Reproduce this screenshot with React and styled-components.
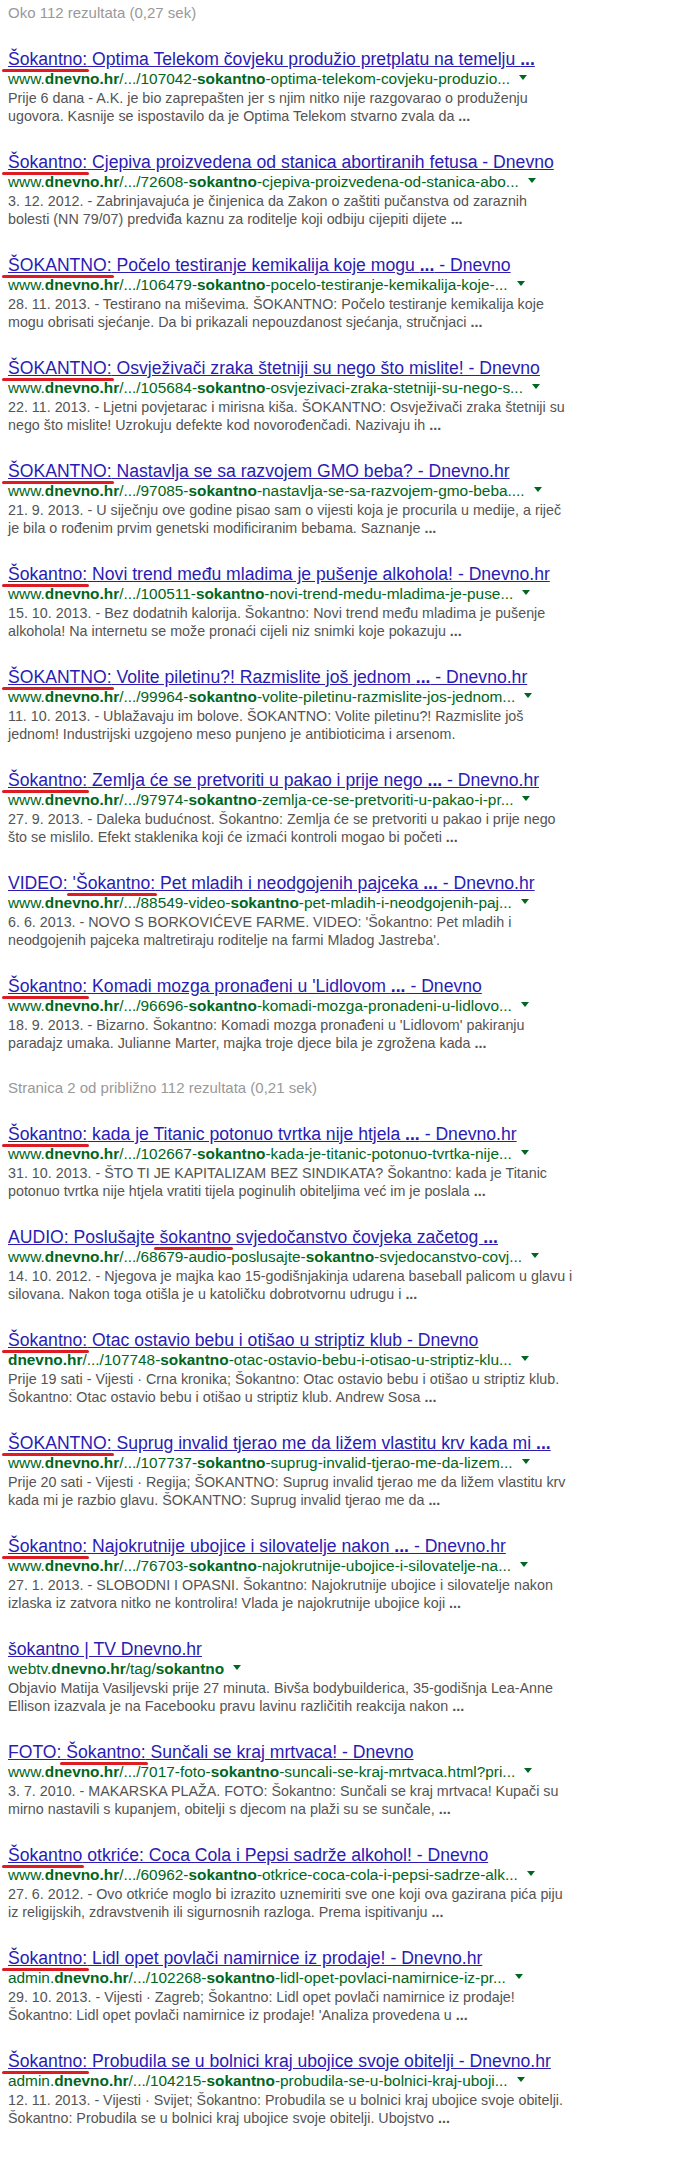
import React from 'react';
import styled, { createGlobalStyle } from 'styled-components';

const GlobalStyle = createGlobalStyle`
  body {
    margin: 0;
    background: #fff;
    font-family: Arial, "Liberation Sans", sans-serif;
  }
`;

const Page = styled.div`
  width: 700px;
  padding: 4px 0 20px 8px;
  box-sizing: border-box;
`;

const Stats = styled.div`
  font-size: 15px;
  line-height: 18px;
  color: #999;
  margin-bottom: 27px;
  margin-top: ${(p) => (p.$second ? '23px' : '0')};
`;

const Result = styled.div`
  margin-bottom: 27px;
`;

const Title = styled.a`
  display: inline-block;
  font-size: 17.6px;
  line-height: 20px;
  color: #2a1cb4;
  text-decoration: underline;
  white-space: nowrap;
  cursor: pointer;
`;

const Marked = styled.span`
  position: relative;

  &::after {
    content: '';
    position: absolute;
    left: -6px;
    right: -2px;
    bottom: -3px;
    height: 3px;
    border-radius: 2px;
    background: #dd1c24;
  }
`;

const Url = styled.div`
  font-size: 15.4px;
  line-height: 20px;
  color: #006621;
  white-space: nowrap;

  b {
    font-weight: bold;
  }
`;

const Arrow = styled.span`
  display: inline-block;
  margin-left: 9px;
  width: 0;
  height: 0;
  border-left: 4px solid transparent;
  border-right: 4px solid transparent;
  border-top: 5px solid #006621;
  vertical-align: middle;
  position: relative;
  top: -2px;
`;

const Snippet = styled.div`
  font-size: 14.3px;
  line-height: 18px;
  color: #545454;
  white-space: nowrap;
`;

const withDots = (text) =>
  text.split('...').map((part, i, arr) => (
    <React.Fragment key={i}>
      {part}
      {i < arr.length - 1 && <b>...</b>}
    </React.Fragment>
  ));

const D = 'dnevno.hr';
const S = 'sokantno';

const page1 = [
  {
    t: ['', 'Šokantno:', ' Optima Telekom čovjeku produžio pretplatu na temelju ...'],
    u: ['www.', D, '/.../107042-', S, '-optima-telekom-covjeku-produzio...'],
    s: ['Prije 6 dana - A.K. je bio zaprepašten jer s njim nitko nije razgovarao o produženju', 'ugovora. Kasnije se ispostavilo da je Optima Telekom stvarno zvala da ...'],
  },
  {
    t: ['', 'Šokantno:', ' Cjepiva proizvedena od stanica abortiranih fetusa - Dnevno'],
    u: ['www.', D, '/.../72608-', S, '-cjepiva-proizvedena-od-stanica-abo...'],
    s: ['3. 12. 2012. - Zabrinjavajuća je činjenica da Zakon o zaštiti pučanstva od zaraznih', 'bolesti (NN 79/07) predviđa kaznu za roditelje koji odbiju cijepiti dijete ...'],
  },
  {
    t: ['', 'ŠOKANTNO:', ' Počelo testiranje kemikalija koje mogu ... - Dnevno'],
    u: ['www.', D, '/.../106479-', S, '-pocelo-testiranje-kemikalija-koje-...'],
    s: ['28. 11. 2013. - Testirano na miševima. ŠOKANTNO: Počelo testiranje kemikalija koje', 'mogu obrisati sjećanje. Da bi prikazali nepouzdanost sjećanja, stručnjaci ...'],
  },
  {
    t: ['', 'ŠOKANTNO:', ' Osvježivači zraka štetniji su nego što mislite! - Dnevno'],
    u: ['www.', D, '/.../105684-', S, '-osvjezivaci-zraka-stetniji-su-nego-s...'],
    s: ['22. 11. 2013. - Ljetni povjetarac i mirisna kiša. ŠOKANTNO: Osvježivači zraka štetniji su', 'nego što mislite! Uzrokuju defekte kod novorođenčadi. Nazivaju ih ...'],
  },
  {
    t: ['', 'ŠOKANTNO:', ' Nastavlja se sa razvojem GMO beba? - Dnevno.hr'],
    u: ['www.', D, '/.../97085-', S, '-nastavlja-se-sa-razvojem-gmo-beba....'],
    s: ['21. 9. 2013. - U siječnju ove godine pisao sam o vijesti koja je procurila u medije, a riječ', 'je bila o rođenim prvim genetski modificiranim bebama. Saznanje ...'],
  },
  {
    t: ['', 'Šokantno:', ' Novi trend među mladima je pušenje alkohola! - Dnevno.hr'],
    u: ['www.', D, '/.../100511-', S, '-novi-trend-medu-mladima-je-puse...'],
    s: ['15. 10. 2013. - Bez dodatnih kalorija. Šokantno: Novi trend među mladima je pušenje', 'alkohola! Na internetu se može pronaći cijeli niz snimki koje pokazuju ...'],
  },
  {
    t: ['', 'ŠOKANTNO:', ' Volite piletinu?! Razmislite još jednom ... - Dnevno.hr'],
    u: ['www.', D, '/.../99964-', S, '-volite-piletinu-razmislite-jos-jednom...'],
    s: ['11. 10. 2013. - Ublažavaju im bolove. ŠOKANTNO: Volite piletinu?! Razmislite još', 'jednom! Industrijski uzgojeno meso punjeno je antibioticima i arsenom.'],
  },
  {
    t: ['', 'Šokantno:', ' Zemlja će se pretvoriti u pakao i prije nego ... - Dnevno.hr'],
    u: ['www.', D, '/.../97974-', S, '-zemlja-ce-se-pretvoriti-u-pakao-i-pr...'],
    s: ['27. 9. 2013. - Daleka budućnost. Šokantno: Zemlja će se pretvoriti u pakao i prije nego', 'što se mislilo. Efekt staklenika koji će izmaći kontroli mogao bi početi ...'],
  },
  {
    t: ['VIDEO: ', "'Šokantno:", ' Pet mladih i neodgojenih pajceka ... - Dnevno.hr'],
    u: ['www.', D, '/.../88549-video-', S, '-pet-mladih-i-neodgojenih-paj...'],
    s: ["6. 6. 2013. - NOVO S BORKOVIĆEVE FARME. VIDEO: 'Šokantno: Pet mladih i", "neodgojenih pajceka maltretiraju roditelje na farmi Mladog Jastreba'."],
  },
  {
    t: ['', 'Šokantno:', " Komadi mozga pronađeni u 'Lidlovom ... - Dnevno"],
    u: ['www.', D, '/.../96696-', S, '-komadi-mozga-pronadeni-u-lidlovo...'],
    s: ["18. 9. 2013. - Bizarno. Šokantno: Komadi mozga pronađeni u 'Lidlovom' pakiranju", 'paradajz umaka. Julianne Marter, majka troje djece bila je zgrožena kada ...'],
  },
];

const page2 = [
  {
    t: ['', 'Šokantno:', ' kada je Titanic potonuo tvrtka nije htjela ... - Dnevno.hr'],
    u: ['www.', D, '/.../102667-', S, '-kada-je-titanic-potonuo-tvrtka-nije...'],
    s: ['31. 10. 2013. - ŠTO TI JE KAPITALIZAM BEZ SINDIKATA? Šokantno: kada je Titanic', 'potonuo tvrtka nije htjela vratiti tijela poginulih obiteljima već im je poslala ...'],
  },
  {
    t: ['AUDIO: Poslušajte ', 'šokantno', ' svjedočanstvo čovjeka začetog ...'],
    u: ['www.', D, '/.../68679-audio-poslusajte-', S, '-svjedocanstvo-covj...'],
    s: ['14. 10. 2012. - Njegova je majka kao 15-godišnjakinja udarena baseball palicom u glavu i', 'silovana. Nakon toga otišla je u katoličku dobrotvornu udrugu i ...'],
  },
  {
    t: ['', 'Šokantno:', ' Otac ostavio bebu i otišao u striptiz klub - Dnevno'],
    u: ['', D, '/.../107748-', S, '-otac-ostavio-bebu-i-otisao-u-striptiz-klu...'],
    s: ['Prije 19 sati - Vijesti · Crna kronika; Šokantno: Otac ostavio bebu i otišao u striptiz klub.', 'Šokantno: Otac ostavio bebu i otišao u striptiz klub. Andrew Sosa ...'],
  },
  {
    t: ['', 'ŠOKANTNO:', ' Suprug invalid tjerao me da ližem vlastitu krv kada mi ...'],
    u: ['www.', D, '/.../107737-', S, '-suprug-invalid-tjerao-me-da-lizem...'],
    s: ['Prije 20 sati - Vijesti · Regija; ŠOKANTNO: Suprug invalid tjerao me da ližem vlastitu krv', 'kada mi je razbio glavu. ŠOKANTNO: Suprug invalid tjerao me da ...'],
  },
  {
    t: ['', 'Šokantno:', ' Najokrutnije ubojice i silovatelje nakon ... - Dnevno.hr'],
    u: ['www.', D, '/.../76703-', S, '-najokrutnije-ubojice-i-silovatelje-na...'],
    s: ['27. 1. 2013. - SLOBODNI I OPASNI. Šokantno: Najokrutnije ubojice i silovatelje nakon', 'izlaska iz zatvora nitko ne kontrolira! Vlada je najokrutnije ubojice koji ...'],
  },
  {
    t: ['šokantno | TV Dnevno.hr', '', ''],
    u: ['webtv.', D, '/tag/', S, ''],
    s: ['Objavio Matija Vasiljevski prije 27 minuta. Bivša bodybuilderica, 35-godišnja Lea-Anne', 'Ellison izazvala je na Facebooku pravu lavinu različitih reakcija nakon ...'],
  },
  {
    t: ['FOTO: ', 'Šokantno:', ' Sunčali se kraj mrtvaca! - Dnevno'],
    u: ['www.', D, '/.../7017-foto-', S, '-suncali-se-kraj-mrtvaca.html?pri...'],
    s: ['3. 7. 2010. - MAKARSKA PLAŽA. FOTO: Šokantno: Sunčali se kraj mrtvaca! Kupači su', 'mirno nastavili s kupanjem, obitelji s djecom na plaži su se sunčale, ...'],
  },
  {
    t: ['', 'Šokantno', ' otkriće: Coca Cola i Pepsi sadrže alkohol! - Dnevno'],
    u: ['www.', D, '/.../60962-', S, '-otkrice-coca-cola-i-pepsi-sadrze-alk...'],
    s: ['27. 6. 2012. - Ovo otkriće moglo bi izrazito uznemiriti sve one koji ova gazirana pića piju', 'iz religijskih, zdravstvenih ili sigurnosnih razloga. Prema ispitivanju ...'],
  },
  {
    t: ['', 'Šokantno:', ' Lidl opet povlači namirnice iz prodaje! - Dnevno.hr'],
    u: ['admin.', D, '/.../102268-', S, '-lidl-opet-povlaci-namirnice-iz-pr...'],
    s: ['29. 10. 2013. - Vijesti · Zagreb; Šokantno: Lidl opet povlači namirnice iz prodaje!', "Šokantno: Lidl opet povlači namirnice iz prodaje! 'Analiza provedena u ..."],
  },
  {
    t: ['', 'Šokantno:', ' Probudila se u bolnici kraj ubojice svoje obitelji - Dnevno.hr'],
    u: ['admin.', D, '/.../104215-', S, '-probudila-se-u-bolnici-kraj-uboji...'],
    s: ['12. 11. 2013. - Vijesti · Svijet; Šokantno: Probudila se u bolnici kraj ubojice svoje obitelji.', 'Šokantno: Probudila se u bolnici kraj ubojice svoje obitelji. Ubojstvo ...'],
  },
];

const SearchResult = ({ item }) => {
  const [pre, mark, post] = item.t;
  const [host, domain, path, word, rest] = item.u;
  return (
    <Result>
      <Title>
        {withDots(pre)}
        {mark && <Marked>{mark}</Marked>}
        {withDots(post)}
      </Title>
      <Url>
        {host}
        <b>{domain}</b>
        {path}
        <b>{word}</b>
        {rest}
        <Arrow />
      </Url>
      {item.s.map((line, i) => (
        <Snippet key={i}>{withDots(line)}</Snippet>
      ))}
    </Result>
  );
};

export default function App() {
  return (
    <>
      <GlobalStyle />
      <Page>
        <Stats>Oko 112 rezultata (0,27 sek)</Stats>
        {page1.map((item, i) => (
          <SearchResult key={i} item={item} />
        ))}
        <Stats $second>Stranica 2 od približno 112 rezultata (0,21 sek)</Stats>
        {page2.map((item, i) => (
          <SearchResult key={i} item={item} />
        ))}
      </Page>
    </>
  );
}
